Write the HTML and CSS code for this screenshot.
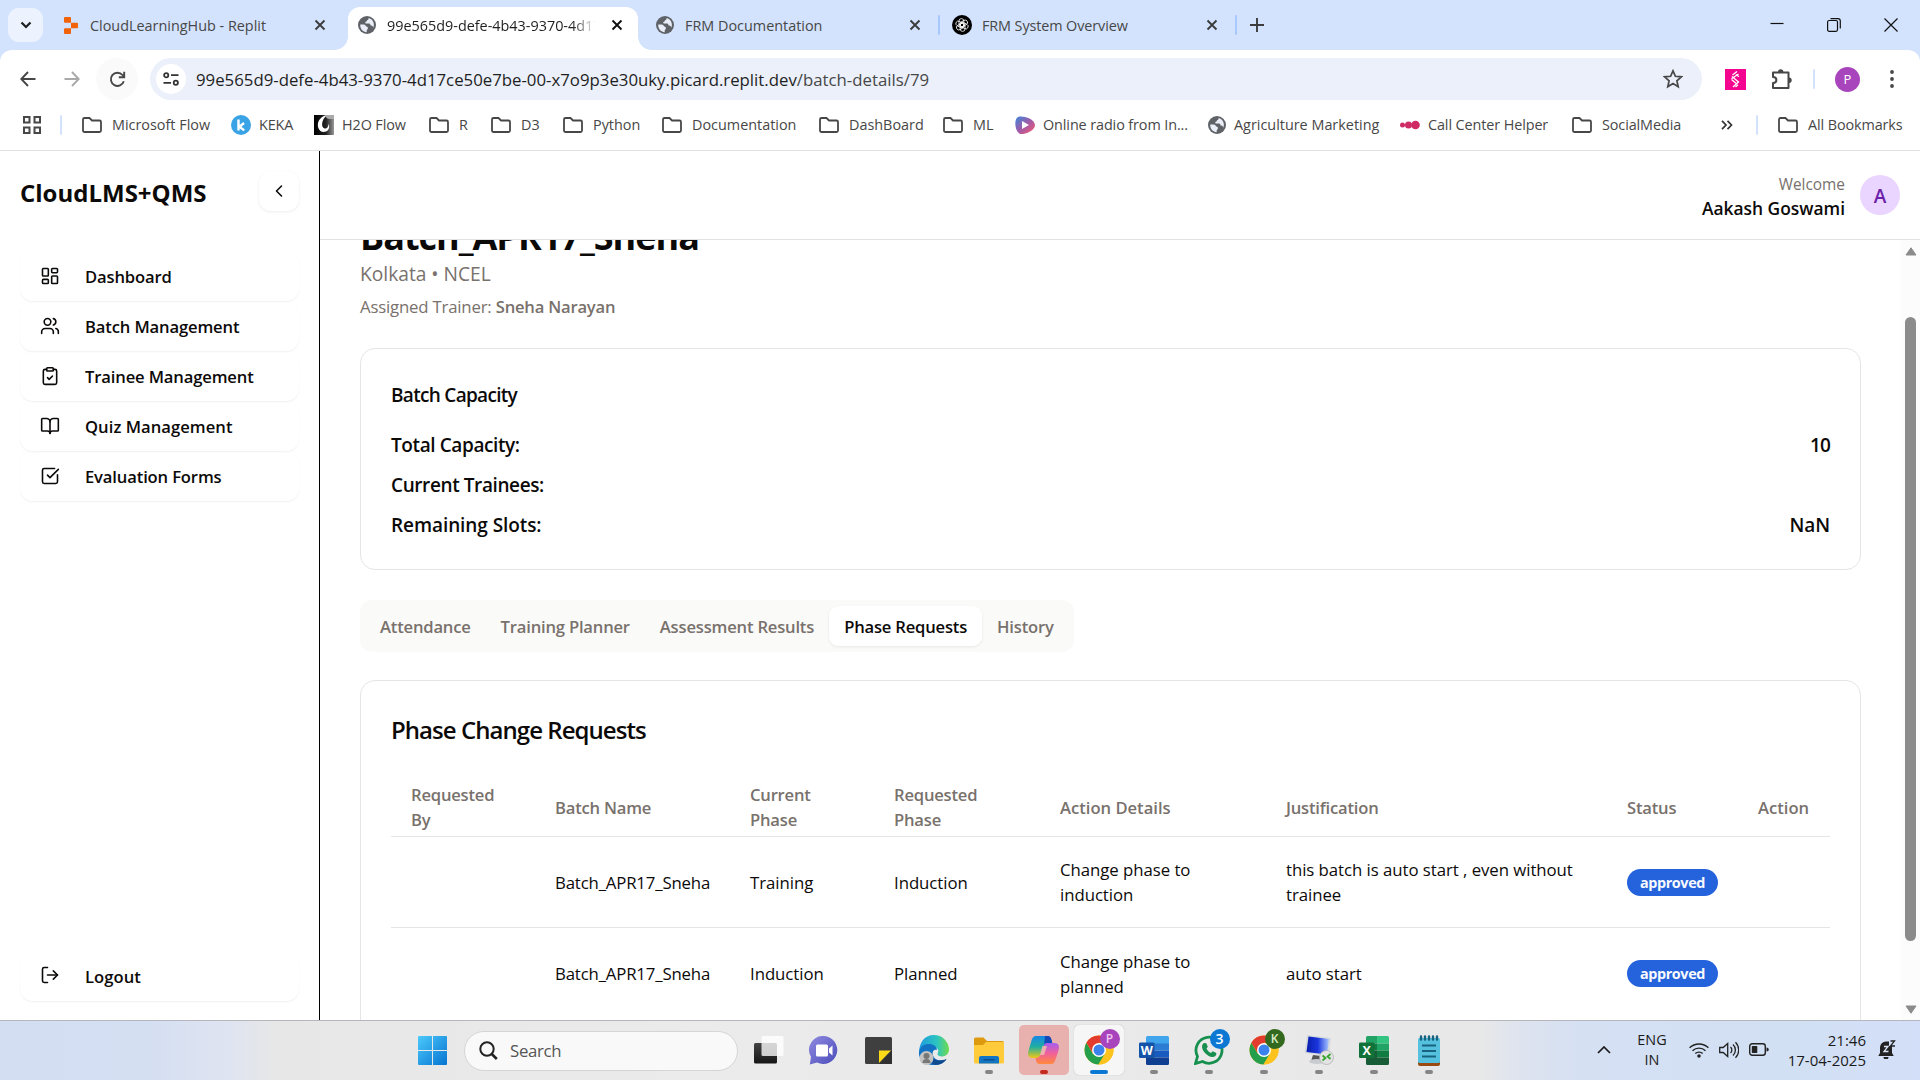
FILE: index.html
```html
<!DOCTYPE html>
<html lang="en">
<head>
<meta charset="utf-8">
<title>CloudLMS+QMS</title>
<link rel="stylesheet" href="styles.css">
</head>
<body>
<svg class="defs" aria-hidden="true">
  <defs>
    <symbol id="x" viewBox="0 0 12 12"><path d="M1.500 1.500l9 9M10.500 1.500l-9 9" fill="none" stroke="currentColor" stroke-width="1.900"/></symbol>
    <symbol id="folder" viewBox="0 0 22 18"><path d="M2 3.500a1.500 1.500 0 0 1 1.500-1.500h5l2.500 2.500h7.500a1.500 1.500 0 0 1 1.500 1.500v8.500a1.500 1.500 0 0 1-1.500 1.500h-15a1.500 1.500 0 0 1-1.500-1.500z" fill="none" stroke="#474747" stroke-width="1.800"/></symbol>
    <symbol id="globe" viewBox="0 0 18 18"><circle cx="9" cy="9" r="9" fill="#5f6368"/><path d="M2.200 8.500h3.300c1.500 0 2.300.8 2.500 2 1.200 0 2 .5 1.900 1.800-.1 1.200-1.100 1.300-1.200 2.200v1.700C5 16 2 12.800 2.200 8.500zM10.500 2c.3 1.300-.3 2-1.500 2.200-.2 1-.7 1.600-1.700 1.700-.1 1 .2 1.600 1.200 1.600h2.700c1 0 1.300 1 1.300 2 1.500 0 2.600.6 2.800 2.200 1.900-4.200-.8-9-4.800-9.700z" fill="#e9eef8"/></symbol>
    <symbol id="chrome" viewBox="0 0 30 30"><circle cx="15" cy="15" r="14.500" fill="#fcc31e"/><path d="M2.400 7.800a14.500 14.500 0 0 0 12.100 21.700l6.600-10.900L9 19z" fill="#269f4c"/><path d="M27.600 7.800A14.500 14.500 0 0 1 14.500 29.500l6.800-11L19.500 8z" fill="#fcc31e"/><path d="M2.400 7.800A14.500 14.500 0 0 1 27.600 7.800H15L9 18.500z" fill="#e33b2e"/><circle cx="15" cy="15" r="7" fill="#fff"/><circle cx="15" cy="15" r="5.500" fill="#3b82ec"/></symbol>
  </defs>
</svg>

<header class="tabstrip">
  <div class="tab-search"><svg width="12" height="8" viewBox="0 0 12 8"><path d="M1.500 1.500L6 6l4.500-4.500" fill="none" stroke="#1f1f1f" stroke-width="2.200"/></svg></div>
  <div class="tab tab-1">
    <svg width="14" height="17" viewBox="0 0 14 17"><path d="M0 1a1 1 0 0 1 1-1h5a1 1 0 0 1 1 1v4.700H1a1 1 0 0 1-1-1zM7 5.700h6a1 1 0 0 1 1 1v3.600a1 1 0 0 1-1 1H7zM0 12.300a1 1 0 0 1 1-1h6V16a1 1 0 0 1-1 1H1a1 1 0 0 1-1-1z" fill="#f26207"/></svg>
    <span class="tab-title">CloudLearningHub - Replit</span>
    <svg class="tab-x" width="12" height="12"><use href="#x"/></svg>
  </div>
  <div class="tab tab-active">
    <svg width="18" height="18"><use href="#globe"/></svg>
    <span class="tab-title fade">99e565d9-defe-4b43-9370-4d17</span>
    <svg class="tab-x" width="12" height="12"><use href="#x"/></svg>
  </div>
  <div class="tab tab-3">
    <svg width="18" height="18"><use href="#globe"/></svg>
    <span class="tab-title">FRM Documentation</span>
    <svg class="tab-x" width="12" height="12"><use href="#x"/></svg>
  </div>
  <i class="sep"></i>
  <div class="tab tab-4">
    <svg width="20" height="20" viewBox="0 0 20 20"><circle cx="10" cy="10" r="10" fill="#000"/><g fill="none" stroke="#fff" stroke-width=".8"><rect id="lobe" x="7" y="3.600" width="4.800" height="8.400" rx="2.400"/><use href="#lobe" transform="rotate(60 10 10)"/><use href="#lobe" transform="rotate(120 10 10)"/><use href="#lobe" transform="rotate(180 10 10)"/><use href="#lobe" transform="rotate(240 10 10)"/><use href="#lobe" transform="rotate(300 10 10)"/></g></svg>
    <span class="tab-title">FRM System Overview</span>
    <svg class="tab-x" width="12" height="12"><use href="#x"/></svg>
  </div>
  <i class="sep"></i>
  <svg class="new-tab" width="14" height="14" viewBox="0 0 14 14"><path d="M7 0v14M0 7h14" stroke="#3c3c3c" stroke-width="1.900"/></svg>
  <div class="window-controls">
    <svg width="14" height="14" viewBox="0 0 14 14"><path d="M.5 5.500h13" stroke="#111" stroke-width="1.200"/></svg>
    <svg width="14" height="14" viewBox="0 0 14 14"><path d="M.6 4a1.500 1.500 0 0 1 1.500-1.500H9A1.500 1.500 0 0 1 10.500 4v7.800a1.500 1.500 0 0 1-1.500 1.500H2.100A1.500 1.500 0 0 1 .6 11.800zM3.500.7H11A2.300 2.300 0 0 1 13.300 3v7.500" fill="none" stroke="#111" stroke-width="1.200"/></svg>
    <svg width="14" height="14" viewBox="0 0 14 14"><path d="M.5.5l13 13M13.500.5l-13 13" stroke="#111" stroke-width="1.200"/></svg>
  </div>
</header>

<div class="chrome-body">
  <div class="toolbar">
    <svg class="nav-icon" width="16" height="16" viewBox="0 0 16 16"><path d="M15.500 8H1.500M8 1L1.300 8 8 15" fill="none" stroke="#474747" stroke-width="1.900"/></svg>
    <svg class="nav-icon dim" width="16" height="16" viewBox="0 0 16 16"><path d="M.5 8h14M8 1l6.700 7L8 15" fill="none" stroke="#a9a9a9" stroke-width="1.900"/></svg>
    <div class="reload"><svg width="17" height="17" viewBox="0 0 17 17"><path d="M14.800 10.200A6.600 6.600 0 1 1 13.500 4l1.300 1.500M15.200.8v5.400H9.800" fill="none" stroke="#474747" stroke-width="1.900"/></svg></div>
    <div class="omnibox">
      <div class="site-info"><svg width="16" height="14" viewBox="0 0 16 14"><g fill="none" stroke="#333" stroke-width="1.800"><circle cx="3.200" cy="3.200" r="2.100"/><path d="M8 3.200h7.500M.5 10.800H8"/><circle cx="12.800" cy="10.800" r="2.100"/></g></svg></div>
      <span class="url">99e565d9-defe-4b43-9370-4d17ce50e7be-00-x7o9p3e30uky.picard.replit.dev<span class="path">/batch-details/79</span></span>
      <svg class="star" width="20" height="20" viewBox="0 0 20 20"><path d="M10 1.800l2.400 5.500 6 .5-4.500 4 1.300 5.900L10 14.600l-5.200 3.100 1.300-5.900-4.500-4 6-.5z" fill="none" stroke="#474747" stroke-width="1.700"/></svg>
    </div>
    <svg class="ext" width="21" height="21" viewBox="0 0 21 21"><rect width="21" height="21" fill="#f5058f"/><path d="M12 2.500L7.500 6M13.500 5L6.500 9.800M7 7.500l6.500 5.500M6.500 10.500l5 4.300M14 12.500l-6 5.500M13 15.800L10.500 18M11 5.500l3 2.200" stroke="#fff" stroke-width="1.300"/></svg>
    <svg class="puzzle" width="22" height="22" viewBox="0 0 22 22"><path d="M2 4.500h15.500v15.500H2v-5c4.500 0 4.500-6 0-6z" fill="none" stroke="#474747" stroke-width="2" stroke-linejoin="round"/><path d="M7 4a2.700 2.700 0 0 1 5.400 0zM18 9.500a2.700 2.700 0 0 1 0 5.400z" fill="#474747"/></svg>
    <i class="sep light tool-sep"></i>
    <div class="profile">P</div>
    <svg class="menu-dots" width="4" height="18" viewBox="0 0 4 18"><g fill="#474747"><circle cx="2" cy="2" r="1.900"/><circle cx="2" cy="9" r="1.900"/><circle cx="2" cy="16" r="1.900"/></g></svg>
  </div>
  <nav class="bookmarks">
    <svg width="18" height="18" viewBox="0 0 18 18"><g fill="none" stroke="#474747" stroke-width="2"><path d="M1 1h5.500v5.500H1zM11.500 1H17v5.500h-5.500zM1 11.500h5.500V17H1zM11.500 11.500H17V17h-5.500z"/></g></svg>
    <i class="sep light"></i>
    <a><svg class="fo" width="22" height="18"><use href="#folder"/></svg>Microsoft Flow</a>
    <a><svg width="20" height="20" viewBox="0 0 20 20"><circle cx="10" cy="10" r="10" fill="#3aa3e6"/><path d="M7.500 4.500v11M13 8l-4.500 3.700 4.700 3.700" fill="none" stroke="#fff" stroke-width="2.400"/></svg><span class="tight">KEKA</span></a>
    <a><svg width="20" height="20" viewBox="0 0 20 20"><defs><linearGradient id="h"><stop offset="0" stop-color="#000"/><stop offset=".6" stop-color="#222"/><stop offset="1" stop-color="#999"/></linearGradient></defs><path d="M0 0h20v20H0z" fill="url(#h)"/><path d="M13 0C7 1 3 6 4 12c1 4 4.500 6 8 4.500 3-1.300 4-5 2.500-7.500 0 3-1.500 5-4 4.500C7 12.500 7 5 13 0z" fill="#fff"/><path d="M11 1c2 4 6 3 9 3V0h-8z" fill="#aaa"/></svg><span class="tight">H2O Flow</span></a>
    <a><svg class="fo" width="22" height="18"><use href="#folder"/></svg>R</a>
    <a><svg class="fo" width="22" height="18"><use href="#folder"/></svg>D3</a>
    <a><svg class="fo" width="22" height="18"><use href="#folder"/></svg>Python</a>
    <a><svg class="fo" width="22" height="18"><use href="#folder"/></svg>Documentation</a>
    <a><svg class="fo" width="22" height="18"><use href="#folder"/></svg>DashBoard</a>
    <a><svg class="fo" width="22" height="18"><use href="#folder"/></svg>ML</a>
    <a><svg width="20" height="18" viewBox="0 0 20 18"><defs><linearGradient id="r" x1="0" y1="0" x2="1" y2="1"><stop offset=".1" stop-color="#4f7fd0"/><stop offset=".5" stop-color="#a05aa8"/><stop offset="1" stop-color="#ff5a6a"/></linearGradient></defs><path d="M3 1C7-.5 19 2 20 9c0 6-11 10-15 9C0 16-1.500 3 3 1z" fill="url(#r)"/><path d="M7 5l7 4-7 4z" fill="#fff"/></svg><span class="tight">Online radio from In...</span></a>
    <a><svg width="18" height="18"><use href="#globe"/></svg>Agriculture Marketing</a>
    <a><svg width="20" height="10" viewBox="0 0 20 10"><g fill="#cf2b65"><circle cx="2.500" cy="5" r="2.500"/><circle cx="8.500" cy="5" r="3.500"/><circle cx="15.500" cy="5" r="4.300"/></g></svg><span class="tight">Call Center Helper</span></a>
    <a><svg class="fo" width="22" height="18"><use href="#folder"/></svg><span class="tight">SocialMedia</span></a>
    <svg width="12" height="10" viewBox="0 0 12 10"><path d="M1 .8L5 5 1 9.200M6.500.8l4 4.200-4 4.200" fill="none" stroke="#333" stroke-width="1.700"/></svg>
    <i class="sep light"></i>
    <a><svg class="fo" width="22" height="18"><use href="#folder"/></svg><span class="tight">All Bookmarks</span></a>
  </nav>
</div>

<div class="app">
  <aside class="sidebar">
    <div class="brand-row">
      <h1 class="brand">CloudLMS+QMS</h1>
      <button class="collapse"><svg class="lu" width="20" height="20" viewBox="0 0 24 24"><path d="m15 18-6-6 6-6"/></svg></button>
    </div>
    <nav class="menu">
      <a class="menu-item"><svg class="lu" viewBox="0 0 24 24"><rect width="7" height="9" x="3" y="3" rx="1"/><rect width="7" height="5" x="14" y="3" rx="1"/><rect width="7" height="9" x="14" y="12" rx="1"/><rect width="7" height="5" x="3" y="16" rx="1"/></svg>Dashboard</a>
      <a class="menu-item"><svg class="lu" viewBox="0 0 24 24"><path d="M16 21v-2a4 4 0 0 0-4-4H6a4 4 0 0 0-4 4v2"/><circle cx="9" cy="7" r="4"/><path d="M22 21v-2a4 4 0 0 0-3-3.870"/><path d="M16 3.130a4 4 0 0 1 0 7.750"/></svg>Batch Management</a>
      <a class="menu-item"><svg class="lu" viewBox="0 0 24 24"><rect width="8" height="4" x="8" y="2" rx="1"/><path d="M16 4h2a2 2 0 0 1 2 2v14a2 2 0 0 1-2 2H6a2 2 0 0 1-2-2V6a2 2 0 0 1 2-2h2"/><path d="m9 14 2 2 4-4"/></svg>Trainee Management</a>
      <a class="menu-item wide"><svg class="lu" viewBox="0 0 24 24"><path d="M12 7v14"/><path d="M3 18a1 1 0 0 1-1-1V4a1 1 0 0 1 1-1h5a4 4 0 0 1 4 4 4 4 0 0 1 4-4h5a1 1 0 0 1 1 1v13a1 1 0 0 1-1 1h-6a3 3 0 0 0-3 3 3 3 0 0 0-3-3z"/></svg>Quiz Management</a>
      <a class="menu-item"><svg class="lu" viewBox="0 0 24 24"><path d="M21 10.500V19a2 2 0 0 1-2 2H5a2 2 0 0 1-2-2V5a2 2 0 0 1 2-2h12.500"/><path d="m9 11 3 3L22 4"/></svg>Evaluation Forms</a>
    </nav>
    <a class="menu-item wide logout"><svg class="lu" viewBox="0 0 24 24"><path d="M9 21H5a2 2 0 0 1-2-2V5a2 2 0 0 1 2-2h4"/><path d="m16 17 5-5-5-5"/><path d="M21 12H9"/></svg>Logout</a>
  </aside>

  <div class="main">
    <div class="topbar">
      <div class="user"><span class="welcome">Welcome</span><span class="user-name">Aakash Goswami</span></div>
      <div class="avatar">A</div>
    </div>
    <div class="viewport">
      <main class="content">
        <h2 class="batch-title">Batch_APR17_Sneha</h2>
        <p class="place">Kolkata • NCEL</p>
        <p class="trainer">Assigned Trainer: <b>Sneha Narayan</b></p>

        <section class="card capacity">
          <h3>Batch Capacity</h3>
          <div class="cap-row"><span class="narrow">Total Capacity:</span><span class="ten">10</span></div>
          <div class="cap-row"><span class="narrow">Current Trainees:</span><span></span></div>
          <div class="cap-row"><span>Remaining Slots:</span><span>NaN</span></div>
        </section>

        <div class="tabs">
          <span>Attendance</span><span>Training Planner</span><span>Assessment Results</span><span class="on">Phase Requests</span><span>History</span>
        </div>

        <section class="card requests">
          <h3>Phase Change Requests</h3>
          <table>
            <colgroup><col class="c1"><col class="c2"><col class="c3"><col class="c4"><col class="c5"><col class="c6"><col class="c7"><col class="c8"></colgroup>
            <thead>
              <tr><th>Requested<br>By</th><th>Batch Name</th><th>Current<br>Phase</th><th>Requested<br>Phase</th><th class="loose">Action Details</th><th>Justification</th><th>Status</th><th class="loose">Action</th></tr>
            </thead>
            <tbody>
              <tr><td></td><td class="snug">Batch_APR17_Sneha</td><td>Training</td><td>Induction</td><td>Change phase to<br>induction</td><td>this batch is auto start , even without<br>trainee</td><td><span class="badge">approved</span></td><td></td></tr>
              <tr><td></td><td class="snug">Batch_APR17_Sneha</td><td>Induction</td><td>Planned</td><td>Change phase to<br>planned</td><td>auto start</td><td><span class="badge">approved</span></td><td></td></tr>
            </tbody>
          </table>
        </section>
      </main>
      <div class="scrollbar">
        <svg width="12" height="9" viewBox="0 0 12 9"><path d="M6 .8L11 8H1z" fill="#8b8b8b" stroke="#8b8b8b" stroke-linejoin="round"/></svg>
        <div class="thumb"></div>
        <svg width="12" height="9" viewBox="0 0 12 9"><path d="M6 8.200L11 1H1z" fill="#8b8b8b" stroke="#8b8b8b" stroke-linejoin="round"/></svg>
      </div>
    </div>
  </div>
</div>

<footer class="taskbar">
  <svg class="start" width="29" height="29" viewBox="0 0 29 29"><defs><linearGradient id="w" x1="0" y1="0" x2="1" y2="1"><stop offset="0" stop-color="#4cc9fb"/><stop offset="1" stop-color="#0574d1"/></linearGradient></defs><path d="M1 0h13v14H0V1a1 1 0 0 1 1-1zM15 0h13a1 1 0 0 1 1 1v13H15zM0 15h14v14H1a1 1 0 0 1-1-1zM15 15h14v13a1 1 0 0 1-1 1H15z" fill="url(#w)"/></svg>
  <div class="search"><svg width="19" height="19" viewBox="0 0 19 19"><circle cx="8" cy="8" r="6.700" fill="none" stroke="#222" stroke-width="2"/><path d="M12.800 13l5 5" stroke="#222" stroke-width="2.600"/></svg><span>Search</span></div>
  <div class="apps">
    <div class="app-icon"><svg width="30" height="28" viewBox="0 0 30 28"><defs><linearGradient id="tv" x1="0" y1="0" x2="0" y2="1"><stop offset="0" stop-color="#444"/><stop offset="1" stop-color="#161616"/></linearGradient></defs><rect y="7" width="23" height="20.500" rx="1.500" fill="url(#tv)"/><rect x="7.500" width="22" height="20" rx="1.500" fill="#fff" opacity=".78"/></svg></div>
    <div class="app-icon"><svg width="29" height="29" viewBox="0 0 29 29"><defs><linearGradient id="ch" x1="0" y1="0" x2="1" y2="1"><stop offset="0" stop-color="#8f8ae0"/><stop offset="1" stop-color="#4b4cba"/></linearGradient></defs><path d="M15 0a14 14 0 1 1-7 26.500L.8 28.500 2 21A14 14 0 0 1 15 0z" fill="url(#ch)"/><rect x="7" y="8.500" width="12" height="12" rx="1.500" fill="#fff"/><path d="M20 12.500l3.500-3v10l-3.500-3z" fill="#fff"/></svg></div>
    <div class="app-icon"><svg width="27" height="27" viewBox="0 0 27 27"><rect width="27" height="27" rx="1.500" fill="#3f3f3f"/><path d="M14 13.500h12L14 26z" fill="#fddb16"/><path d="M27 13.500V27H14z" fill="#303030"/></svg></div>
    <div class="app-icon"><svg width="30" height="30" viewBox="0 0 30 30"><defs><linearGradient id="e1"><stop offset="0" stop-color="#1f9be0"/><stop offset=".6" stop-color="#2cc4c0"/><stop offset="1" stop-color="#6fdc4d"/></linearGradient></defs><path d="M15 0a15 15 0 0 1 15 14.500c0 4-3 7-7 7-3.500 0-5.500-1.500-4-4 1.200-2.500-1-6-5.500-6C8 11.500 2 14 0 18 0 8 5 0 15 0z" fill="url(#e1)"/><path d="M0 17C1 11 6 8.500 11 9c4 .3 7 3 7 6-6-1.500-6 8 1 10 4 1 7 0 8.500-1C25 28 20 30 15 30 6 30-1 24 0 17z" fill="#1273c4"/><path d="M13 17c-1.500 6 4 11 14.500 7-3 5-8 6.500-13 5.500-4-2-5-8-1.500-12.500z" fill="#114b8f"/><circle cx="7.500" cy="23" r="7" fill="#c3c3c3"/><circle cx="7.500" cy="21" r="3" fill="#777"/><path d="M3.500 28a4 4 0 0 1 8 0z" fill="#777"/></svg></div>
    <div class="app-icon run"><svg width="30" height="27" viewBox="0 0 30 27"><path d="M0 2a1.500 1.500 0 0 1 1.500-1.500h8L13 4h15.500A1.500 1.500 0 0 1 30 5.500V12H0z" fill="#dd9a0f"/><path d="M0 8h9l3-3h18v20a1.500 1.500 0 0 1-1.500 1.500h-27A1.500 1.500 0 0 1 0 25z" fill="#ffcb3a"/><path d="M5 26.500V21a2 2 0 0 1 2-2h16a2 2 0 0 1 2 2v5.500z" fill="#1274c5"/><path d="M9.500 22.800h11" stroke="#0c4f8c" stroke-width="1.500"/></svg></div>
    <div class="app-icon run alert"><svg width="31" height="28" viewBox="0 0 31 28"><defs><linearGradient id="c1" x1="0" y1="0" x2="0" y2="1"><stop offset="0" stop-color="#1886e8"/><stop offset=".5" stop-color="#20b0a0"/><stop offset="1" stop-color="#f3c712"/></linearGradient><linearGradient id="c2" x1="0" y1="0" x2="0" y2="1"><stop offset="0" stop-color="#a45df0"/><stop offset=".5" stop-color="#f2609a"/><stop offset="1" stop-color="#ff8a3c"/></linearGradient></defs><path d="M8 0h11c3 0 4 2 5 7h-4c-2.500 0-3.500 1-4.200 3.500L13 18c-1 3-2 4-5 4H5c-5 0-6-3-4-9l2.500-8.500C4.500 1.500 5.500 0 8 0z" fill="url(#c1)"/><path d="M17 0h3c2.500 0 3.500 2.500 4.300 7H20c-2 0-3.500 1-4 3z" fill="#1548b8"/><path d="M23 28H12c-3 0-4-2-4.500-6 3-.2 4.500-1.500 5.500-4.500l2.500-7.500C16.500 7.500 18 7 20 7h6c5 0 6 3 4 9l-2.500 7.500C26.500 26.500 25.500 28 23 28z" fill="url(#c2)"/><path d="M14.500 10h4.500l-3 9h-4z" fill="#ebb1ae"/></svg></div>
    <div class="app-icon run current"><svg width="30" height="30"><use href="#chrome"/></svg><b class="dot-badge purple">P</b></div>
    <div class="app-icon run"><svg width="30" height="29" viewBox="0 0 30 29"><path d="M7 1.500A1.500 1.500 0 0 1 8.500 0h20A1.500 1.500 0 0 1 30 1.500V8H7z" fill="#41a5ee"/><path d="M7 7.500h23v7H7z" fill="#2b7cd3"/><path d="M7 14.500h23v7H7z" fill="#185abd"/><path d="M7 21.500h23v6a1.500 1.500 0 0 1-1.500 1.500h-20A1.500 1.500 0 0 1 7 27.500z" fill="#103f91"/><rect y="6.500" width="15.500" height="15.500" rx="1.300" fill="#1553a8"/><text x="7.700" y="18.600" class="office">W</text></svg></div>
    <div class="app-icon run"><svg width="30" height="30" viewBox="0 0 30 30"><path d="M1.500 28.500l2-7.200A13 13 0 1 1 8.500 26.500z" fill="none" stroke="#17904f" stroke-width="2.800"/><path d="M10 8l2.300.2 1.500 3.600-1.300 2c1 2 2.500 3.300 4.500 4.200l1.700-1.700 3.600 1.800c.3 3-2 4-4 4C13.500 21.500 8.500 16.500 8 12c0-1.500.5-3 2-4z" fill="#17904f"/></svg><b class="dot-badge blue">3</b></div>
    <div class="app-icon run"><svg width="30" height="30"><use href="#chrome"/></svg><b class="dot-badge green">K</b></div>
    <div class="app-icon run"><svg width="30" height="30" viewBox="0 0 30 30"><defs><linearGradient id="rd" x1="0" y1="0" x2="1" y2="0"><stop offset="0" stop-color="#0a1fae"/><stop offset=".5" stop-color="#1a35dc"/><stop offset="1" stop-color="#a8c8ff"/></linearGradient></defs><path d="M3 0l24 3-2 18L.5 18z" fill="#d5d8dc"/><path d="M4.500 1.500l20.500 2.500-2 15.500L2.500 17z" fill="url(#rd)"/><path d="M9 20l8 1v5H7z" fill="#555"/><ellipse cx="13" cy="26.500" rx="8" ry="2.500" fill="#c8ccd0"/><circle cx="22.500" cy="22.500" r="7" fill="#e3e3e3" stroke="#aaa" stroke-width=".7"/><path d="M18.500 20.500l3 2.500-3 2.500M26.500 19l-3 2.500 3 2.500" fill="none" stroke="#35a32c" stroke-width="1.700"/></svg></div>
    <div class="app-icon run"><svg width="30" height="29" viewBox="0 0 30 29"><path d="M7 1.500A1.500 1.500 0 0 1 8.500 0H18v7.500H7z" fill="#21a366"/><path d="M18 0h10.500A1.500 1.500 0 0 1 30 1.500v6H18z" fill="#33c481"/><path d="M7 7.500h11v7H7z" fill="#107c41"/><path d="M18 7.500h12v7H18z" fill="#21a366"/><path d="M18 14.500h12v7H18z" fill="#107c41"/><path d="M7 14.500h11v7h12v6a1.500 1.500 0 0 1-1.500 1.500h-20A1.500 1.500 0 0 1 7 27.500z" fill="#185c37"/><rect y="6.500" width="15.500" height="15.500" rx="1.300" fill="#107239"/><text x="7.700" y="18.600" class="office">X</text></svg></div>
    <div class="app-icon run"><svg width="24" height="31" viewBox="0 0 24 31"><path d="M1 27h22v2a2 2 0 0 1-2 2H3a2 2 0 0 1-2-2z" fill="#9a4a10"/><rect x="1" y="3" width="22" height="25" rx="1.500" fill="#55c1de"/><path d="M4 1.500v3M8 1.500v3M12 1.500v3M16 1.500v3M20 1.500v3" stroke="#16627f" stroke-width="2.400" stroke-linecap="round"/><path d="M5 10.500h14M5 16h14M5 21.500h14" stroke="#16627f" stroke-width="1.800"/></svg></div>
  </div>
  <div class="tray">
    <div class="t-up"><svg width="14" height="8" viewBox="0 0 14 8"><path d="M1 7l6-6 6 6" fill="none" stroke="#1a1a1a" stroke-width="1.700"/></svg></div>
    <div class="lang">ENG<br>IN</div>
    <div class="t-ic"><svg width="20" height="16" viewBox="0 0 20 16"><g fill="none" stroke="#222" stroke-width="1.400"><path d="M.6 5.800a13.500 13.500 0 0 1 18.800 0M3.500 8.800a9.300 9.300 0 0 1 13 0M6.300 11.600a5.300 5.300 0 0 1 7.400 0"/></g><circle cx="10" cy="14" r="1.800" fill="#222"/></svg></div>
    <div class="t-ic"><svg width="20" height="18" viewBox="0 0 20 18"><g fill="none" stroke="#222" stroke-width="1.300"><path d="M.7 6.500v5h3.500l4.500 4v-13l-4.500 4zM11.500 6a4 4 0 0 1 0 6M14 3.500a7.500 7.500 0 0 1 0 11M16.500 1.200a11 11 0 0 1 0 15.600"/></g></svg></div>
    <div class="t-ic"><svg width="20" height="13" viewBox="0 0 20 13"><rect x=".7" y=".7" width="15.600" height="11.600" rx="2.500" fill="none" stroke="#222" stroke-width="1.400"/><rect x="2.800" y="3" width="5.500" height="7" rx=".8" fill="#222"/><path d="M17.500 4.500c3 0 3 4 0 4z" fill="#222"/></svg></div>
    <div class="clock">21:46<br>17-04-2025</div>
    <svg class="bell" width="18" height="19" viewBox="0 0 18 19"><path d="M2 13V7.500A6 6 0 0 1 8 1.500h3V6h3v7l1.500 2.500v.5H.5v-.5z" fill="#222"/><path d="M5.500 17h5a2.500 2.500 0 0 1-5 0z" fill="#222"/><path d="M6 6.500h4l-4 5h4.500" fill="none" stroke="#dbe5f6" stroke-width="1.300"/><path d="M12.500 1h4l-4 5h4.500" fill="none" stroke="#222" stroke-width="1.300"/></svg>
  </div>
</footer>
</body>
</html>
```
FILE: styles.css
```css
* { box-sizing: border-box; }
html, body { margin: 0; width: 1920px; height: 1080px; overflow: hidden; }
body {
  display: flex;
  flex-direction: column;
  background: #fff;
  color: #0c0a09;
  font-family: "Open Sans", "Noto Sans", sans-serif;
  font-size: 16.8px;
}
h1, h2, h3, p { margin: 0; }
svg { display: block; flex: none; }
.defs { position: absolute; width: 0; height: 0; }

/* browser tab strip */
.tabstrip {
  display: flex;
  align-items: center;
  height: 50px;
  background: #d3e3fd;
  color: #474747;
  font-size: 14.4px;
}
.tab-search {
  display: grid;
  place-items: center;
  width: 35px;
  height: 34px;
  margin-left: 8px;
  border-radius: 11px;
  background: #ecf3fe;
}
.tab { display: flex; align-items: center; height: 36px; }
.tab-title { margin-left: 12px; white-space: nowrap; }
.tab-x { margin-left: auto; color: #3c3c3c; }
.tab-1 { width: 305px; padding: 0 22px 0 21px; }
.tab-active {
  position: relative;
  align-self: flex-end;
  width: 290px;
  height: 43px;
  padding: 0 15px 7px 10px;
  border-radius: 12px 12px 0 0;
  background: #fff;
  color: #1f1f1f;
}
.tab-active::before, .tab-active::after {
  content: "";
  position: absolute;
  bottom: 0;
  width: 13px;
  height: 13px;
}
.tab-active::before { left: -13px; background: radial-gradient(circle at 0 0, transparent 12.500px, #fff 13px); }
.tab-active::after { right: -13px; background: radial-gradient(circle at 100% 0, transparent 12.500px, #fff 13px); }
.tab-active .tab-x { color: #111; }
.fade {
  width: 209px;
  margin-left: 11px;
  overflow: hidden;
  -webkit-mask-image: linear-gradient(90deg, #000 185px, transparent 209px);
  mask-image: linear-gradient(90deg, #000 185px, transparent 209px);
}
.tab-3 { width: 300px; padding: 0 17px 0 18px; }
.tab-3 .tab-title { margin-left: 11px; }
.tab-4 { width: 295px; padding: 0 17px 0 12px; }
.tab-4 .tab-title { margin-left: 10px; letter-spacing: -.1px; }
.sep { flex: none; width: 2px; height: 20px; border-radius: 1px; background: #a8c7fa; }
.sep.light { background: #d3e3fd; }
.new-tab { margin-left: 13px; }
.window-controls { display: flex; gap: 43px; margin-left: auto; padding-right: 22px; }

/* toolbar and bookmarks */
.chrome-body {
  height: 101px;
  border-bottom: 1px solid #e1e1e1;
  background: linear-gradient(#d3e3fd, #d3e3fd) 0 0 / 100% 14px no-repeat #fff;
}
.toolbar {
  display: flex;
  align-items: center;
  height: 58px;
  padding: 0 26px 0 20px;
  border-radius: 12px 12px 0 0;
  background: #fff;
}
.nav-icon { margin-right: 28px; }
.nav-icon.dim { margin-right: 16px; }
.reload { display: grid; place-items: center; width: 42px; height: 42px; margin-right: 12px; border-radius: 50%; background: #fafafa; }
.omnibox {
  display: flex;
  align-items: center;
  width: 1552px;
  height: 42px;
  padding: 0 19px 0 6px;
  border-radius: 21px;
  background: #ebf0fa;
}
.site-info { display: grid; place-items: center; width: 30px; height: 30px; border-radius: 50%; background: #fff; }
.url { margin-left: 10px; color: #1f1f1f; }
.path { color: #474747; }
.star { margin-left: auto; }
.ext { margin-left: 23px; }
.puzzle { margin-left: 25px; }
.tool-sep { margin-left: 20px; }
.profile {
  display: grid;
  place-items: center;
  width: 25px;
  height: 25px;
  margin: 0 auto 0 20px;
  border-radius: 50%;
  background: #a845bc;
  color: #fff;
  font-size: 13px;
}
.bookmarks {
  display: grid;
  grid-template-columns: 37px 22px 149px 83px 115px 62px 72px 99px 157px 124px 72px 193px 192px 172px 149px 35px 22px auto;
  align-items: center;
  height: 33px;
  padding-left: 23px;
  color: #474747;
  font-size: 14.4px;
}
.bookmarks a { display: flex; align-items: center; gap: 8px; white-space: nowrap; }
.fo { margin-left: -1px; margin-right: 1px; }
.bookmarks .tight { letter-spacing: -.1px; }

/* application shell */
.app { display: flex; height: 869px; }
.sidebar {
  display: flex;
  flex-direction: column;
  width: 320px;
  padding: 20px 20px 19px;
  border-right: 1px solid #000;
}
.brand-row { display: flex; justify-content: space-between; height: 41px; }
.brand { font-size: 24px; line-height: 44px; }
.collapse {
  display: grid;
  place-items: center;
  width: 40px;
  height: 40px;
  padding: 0;
  border: 0;
  border-radius: 12px;
  background: #fff;
  box-shadow: 0 1px 3px rgba(0, 0, 0, .08);
}
.lu { width: 20px; height: 20px; fill: none; stroke: #0c0a09; stroke-width: 1.900; stroke-linecap: round; stroke-linejoin: round; }
.menu { margin-top: 39px; }
.menu-item {
  display: flex;
  align-items: center;
  gap: 25px;
  height: 50px;
  padding-left: 20px;
  border-radius: 13px;
  box-shadow: 0 1px 2px rgba(0, 0, 0, .06);
  font-weight: 600;
  font-size: 16.600px;
  letter-spacing: -.14px;
}
.menu-item.wide { letter-spacing: .05px; }
.logout { margin-top: auto; }
.logout .lu { margin-top: -2px; }

.main { flex: 1; display: flex; flex-direction: column; min-width: 0; }
.topbar {
  display: flex;
  justify-content: flex-end;
  align-items: center;
  gap: 15px;
  height: 89px;
  padding-right: 20px;
  border-bottom: 1px solid #e3e1e0;
}
.user { display: flex; flex-direction: column; align-items: flex-end; padding-top: 4px; }
.welcome { color: #78716c; font-size: 15.400px; line-height: 22px; }
.user-name { font-weight: 600; font-size: 17.400px; line-height: 25px; }
.avatar {
  display: grid;
  place-items: center;
  width: 40px;
  height: 40px;
  border-radius: 50%;
  background: #e9d5ff;
  color: #6b21a8;
  font-weight: 600;
  font-size: 19px;
  line-height: 42px;
}

.viewport { flex: 1; display: flex; min-height: 0; overflow: hidden; }
.content { width: 1581px; padding: 0 40px; margin-top: -23px; }
.batch-title { font-size: 36px; line-height: 40px; letter-spacing: -1px; }
.place { color: #78716c; font-size: 19.200px; line-height: 34px; }
.trainer { padding-top: 1px; color: #78716c; line-height: 30px; letter-spacing: -.2px; }
.trainer b { font-weight: 600; font-size: 16.600px; }

.card {
  width: 1501px;
  padding: 31px 30px 29px;
  border: 1px solid #e7e5e4;
  border-radius: 15px;
}
.capacity { height: 222px; margin-top: 26px; font-weight: 600; font-size: 19px; }
.capacity h3 { margin-bottom: 14px; font-weight: 600; font-size: 19px; line-height: 31px; letter-spacing: -.7px; }
.cap-row { display: flex; justify-content: space-between; line-height: 40px; letter-spacing: -.08px; }
.cap-row .narrow { letter-spacing: -.4px; }
.ten { letter-spacing: -.9px; }

.tabs {
  display: inline-flex;
  align-items: center;
  height: 51px;
  margin-top: 30px;
  padding: 0 5px;
  border-radius: 12px;
  background: #fafaf9;
  box-shadow: 0 1px 1px rgba(0, 0, 0, .02);
  color: #78716c;
  font-weight: 600;
  font-size: 16.600px;
  letter-spacing: -.19px;
}
.tabs span { padding: 1px 15px 0; line-height: 39px; }
.tabs .on { border-radius: 9px; background: #fff; color: #0c0a09; box-shadow: 0 1px 3px rgba(0, 0, 0, .08); }

.requests { height: 400px; margin-top: 29px; }
.requests h3 { margin-bottom: 29px; font-weight: 600; font-size: 24px; line-height: 36px; letter-spacing: -.95px; }
table { width: 1439px; table-layout: fixed; border-collapse: separate; border-spacing: 0; }
.c1 { width: 144px; } .c2 { width: 195px; } .c3 { width: 144px; } .c4 { width: 166px; }
.c5 { width: 226px; } .c6 { width: 341px; } .c7 { width: 131px; } .c8 { width: 92px; }
th, td { padding: 0 0 0 20px; text-align: left; vertical-align: middle; line-height: 25px; white-space: nowrap; }
th { height: 60px; padding-top: 1px; border-bottom: 1px solid #e7e5e4; color: #78716c; font-weight: 600; font-size: 16.600px; letter-spacing: -.2px; }
th.loose { letter-spacing: 0; }
td { height: 91px; letter-spacing: -.05px; }
td.snug { letter-spacing: -.17px; }
tbody tr:first-child td { border-bottom: 1px solid #e7e5e4; }
.badge {
  display: inline-block;
  padding: 0 13px;
  border-radius: 14px;
  background: #2563dc;
  color: #f8fafc;
  font-weight: 700;
  font-size: 14.400px;
  line-height: 27px;
  letter-spacing: -.4px;
}

.scrollbar {
  display: flex;
  flex-direction: column;
  align-items: center;
  width: 19px;
  padding: 7px 0 6px;
  background: #fcfcfc;
}
.thumb { width: 11px; height: 624px; margin: 61px 0 auto; border-radius: 6px; background: #8b8b8b; }

/* Windows taskbar */
.taskbar {
  display: flex;
  align-items: center;
  height: 60px;
  padding-left: 418px;
  border-top: 1px solid #b4b7bc;
  background: linear-gradient(90deg, #d4def3 0, #d5dff2 150px, #dfe4f1 230px, #e7e7e7 275px, #ebebeb 700px, #e8e8e8 1480px, #dfe4ee 1515px, #d5e0f3 1580px, #d2e0f4 1800px, #d3dff8 1920px);
}
.search {
  display: flex;
  align-items: center;
  gap: 12px;
  width: 274px;
  height: 40px;
  margin-left: 17px;
  padding-left: 14px;
  border: 1px solid #d5d5d5;
  border-radius: 20px;
  background: #f9f9f9;
  color: #555;
  font-size: 16.800px;
  letter-spacing: -.3px;
}
.apps { display: flex; margin-left: 3px; }
.app-icon { position: relative; display: grid; place-items: center; width: 55px; height: 59px; padding-bottom: 1px; }
.app-icon svg { position: relative; }
.run::after {
  content: "";
  position: absolute;
  left: 23.500px;
  top: 49px;
  width: 8px;
  height: 4px;
  border-radius: 2px;
  background: #858585;
}
.alert::before, .current::before {
  content: "";
  position: absolute;
  left: 2.500px;
  top: 4px;
  width: 50px;
  height: 50px;
  border-radius: 5px;
  background: #e9b1ae;
}
.current::before { background: #f6f6f6; box-shadow: 0 0 1px #aaa; }
.alert::after { background: #c42b1c; }
.current::after { left: 18.500px; width: 18px; background: #0b78d4; }
.dot-badge {
  position: absolute;
  left: 28.500px;
  top: 8px;
  width: 20px;
  height: 20px;
  border-radius: 50%;
  color: #fff;
  font-size: 12px;
  font-weight: 600;
  line-height: 20px;
  text-align: center;
}
.purple { background: #a845bc; color: #f0c8f4; }
.blue { background: #0b78d4; font-size: 14px; }
.green { background: #33691e; color: #dcedc8; }
.office { fill: #fff; font: 700 12.500px "Open Sans", sans-serif; text-anchor: middle; }
.tray { display: flex; align-items: center; margin-left: auto; padding-right: 24px; padding-bottom: 2px; color: #1a1a1a; font-size: 15px; line-height: 20px; }
.t-up { display: grid; place-items: center; width: 48px; }
.lang { width: 48px; margin-right: 8px; text-align: center; font-size: 14.400px; }
.t-ic { display: grid; place-items: center; width: 30px; }
.clock { width: 92px; text-align: right; }
.bell { margin-left: 12px; }
```
